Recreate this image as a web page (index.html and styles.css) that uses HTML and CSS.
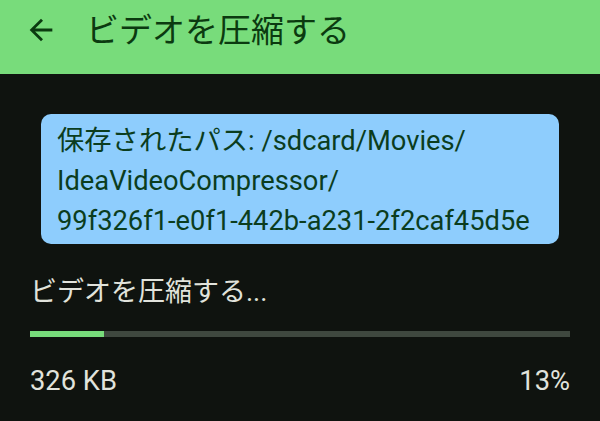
FILE: index.html
```html
<!DOCTYPE html>
<html lang="ja">
<head>
  <meta charset="UTF-8">
  <meta name="viewport" content="width=device-width, initial-scale=1.0">
  <title>ビデオを圧縮する</title>
  <link rel="stylesheet" href="styles.css">
</head>
<body>
  <header class="toolbar">
    <button class="back" aria-label="戻る">
      <svg viewBox="0 0 24 24" width="34" height="34">
        <path d="M20 11H7.83l5.59-5.59L12 4l-8 8 8 8 1.41-1.41L7.83 13H20v-2z" fill="currentColor"/>
      </svg>
    </button>
    <h1 class="title">ビデオを圧縮する</h1>
  </header>

  <main class="content">
    <div class="path-card">
      保存されたパス: /sdcard/Movies/<br>
      IdeaVideoCompressor/<br>
      99f326f1-e0f1-442b-a231-2f2caf45d5e
    </div>

    <p class="status">ビデオを圧縮する...</p>

    <div class="progress">
      <div class="progress-fill" style="width: 13.7%"></div>
    </div>

    <div class="stats">
      <span>326 KB</span>
      <span>13%</span>
    </div>
  </main>
</body>
</html>
```

FILE: styles.css
```css
body {
  margin: 0;
  background: #0f130f;
  font-family: Roboto, "Noto Sans CJK JP", sans-serif;
  color: #e1e3dc;
}
.toolbar {
  height: 74px;
  box-sizing: border-box;
  padding: 0 0 14px 24px;
  display: flex;
  align-items: center;
  background: #78dc7b;
  color: #0b3a10;
}
.back {
  display: flex;
  padding: 0;
  border: none;
  background: none;
  color: inherit;
}
.title {
  margin: 0 0 0 28px;
  font-size: 33px;
  font-weight: normal;
  line-height: 1;
}
.content {
  padding: 40px 30px 0;
}
.path-card {
  margin: 0 11px;
  padding: 7px 16px 3px;
  background: #8ecdfd;
  color: #0b3d1e;
  border-radius: 10px;
  font-size: 27.3px;
  line-height: 40px;
}
.status {
  margin: 30px 0 0;
  font-size: 27px;
  line-height: 36px;
}
.progress {
  margin-top: 21px;
  height: 6px;
  background: #3f483f;
}
.progress-fill {
  height: 100%;
  background: #78dc7b;
}
.stats {
  display: flex;
  justify-content: space-between;
  margin-top: 28px;
  font-size: 27.3px;
  line-height: 32px;
}
```
